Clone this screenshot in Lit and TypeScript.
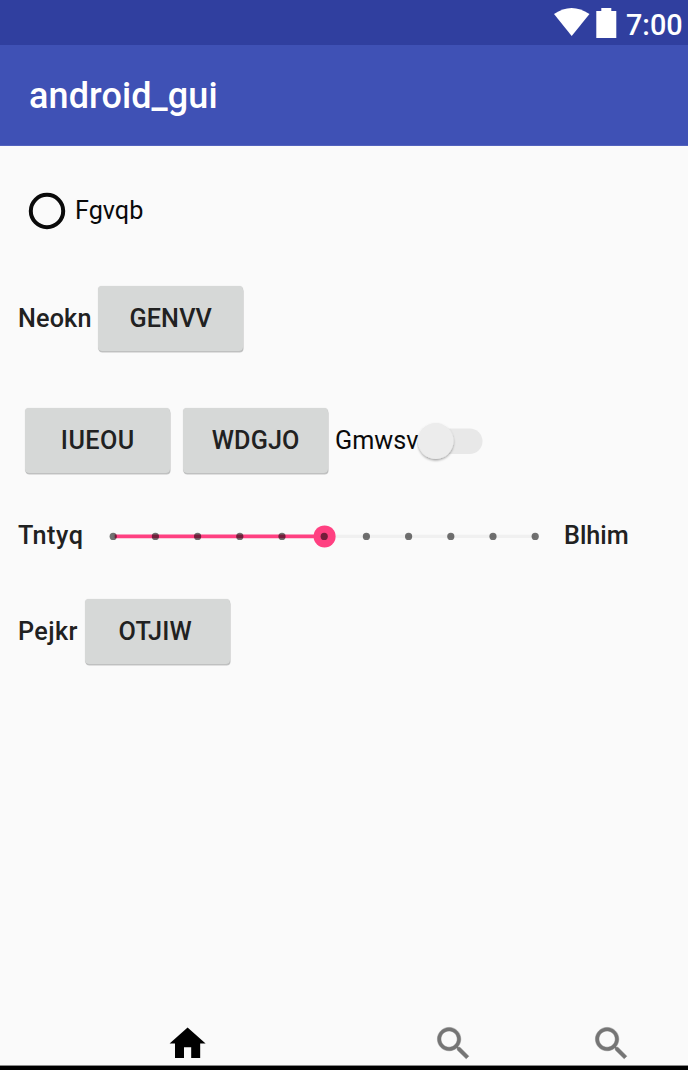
import { LitElement, html, css, svg } from "lit";
import { customElement } from "lit/decorators.js";

const STEPS = 11;
const VALUE = 5;
const STEP_WIDTH = 42.2;
const TRACK_START = 13.2;
const HOME = "M10 20v-6h4v6h5v-8h3L12 3 2 12h3v8z";
const SEARCH =
  "M15.5 14h-.79l-.28-.27C15.41 12.59 16 11.11 16 9.5 16 5.91 13.09 3 9.5 3S3 5.91 3 9.5 5.91 16 9.5 16c1.61 0 3.09-.59 4.23-1.57l.27.28v.79l5 4.99L20.49 19l-4.99-5zm-6 0C7.01 14 5 11.99 5 9.5S7.01 5 9.5 5 14 7.01 14 9.5 11.99 14 9.5 14z";

@customElement("app-root")
export class AppRoot extends LitElement {
  static styles = css`
    :host {
      display: flex;
      flex-direction: column;
      box-sizing: border-box;
      width: 688px;
      height: 1070px;
      overflow: hidden;
      background: #fafafa;
      color: #212121;
      font: 400 25.2px/30px Roboto, sans-serif;
    }
    svg {
      display: block;
      flex: none;
    }
    .status {
      display: flex;
      height: 45px;
      flex: none;
      background: #303f9f;
      color: #fff;
      justify-content: flex-end;
    }
    .clock {
      width: 62px;
      font-size: 28.8px;
      line-height: 51px;
      font-weight: 500;
      white-space: nowrap;
    }
    .bar {
      box-sizing: border-box;
      height: 101px;
      flex: none;
      padding-left: 29px;
      background: #3f51b5;
      border-bottom: 1px solid #5262bd;
      color: #fff;
      font-size: 36px;
      font-weight: 500;
      line-height: 103px;
      letter-spacing: 0.1px;
    }
    .content {
      flex: 1;
      display: flex;
      flex-direction: column;
      padding-left: 18px;
    }
    .row {
      display: flex;
      flex: none;
      align-items: center;
    }
    .radio-row {
      height: 44px;
      margin: 43px 0 53px;
      padding-left: 7px;
      color: #0a0a0a;
    }
    .radio-text {
      margin-left: 6px;
      line-height: 30px;
    }
    .buttons {
      height: 67px;
    }
    .buttons.second {
      margin-top: 55px;
    }
    .buttons.last {
      margin-top: 41px;
    }
    .label {
      font-weight: 500;
      padding-bottom: 2px;
      white-space: nowrap;
    }
    .neokn {
      width: 80px;
      letter-spacing: 0.15px;
    }
    .tntyq {
      width: 82px;
      letter-spacing: 0.5px;
      padding-bottom: 0;
    }
    .pejkr {
      width: 67px;
      letter-spacing: 0.4px;
    }
    .btn {
      box-sizing: border-box;
      width: 145.4px;
      height: 65px;
      margin: 0 0 2px;
      padding: 0;
      border: 0;
      border-radius: 4px;
      background: #d6d8d7;
      box-shadow: 0 0 1px rgba(0, 0, 0, 0.18), 0.5px 1.5px 0.5px #c3c4c4;
      color: #212121;
      font: 500 25.2px/30px Roboto, sans-serif;
      letter-spacing: 0.15px;
    }
    .iueou {
      margin-left: 7px;
      margin-right: 12.6px;
      letter-spacing: 0.4px;
    }
    .otjiw {
      padding-right: 5px;
    }
    .switch-text {
      width: 82px;
      margin-left: 6.6px;
      padding-bottom: 1px;
      color: #0a0a0a;
    }
    .slider-row {
      height: 44px;
      margin-top: 39px;
    }
    .blhim {
      margin-left: 14px;
      padding-bottom: 0;
    }
    .nav {
      box-sizing: border-box;
      display: flex;
      flex: none;
      height: 48px;
      padding: 0.2px 0 0 165.5px;
      border-bottom: 4px solid #000;
      box-shadow: inset 0 -1px #8a8a8a;
    }
    .nav-home {
      margin-right: 223.4px;
    }
    .nav-search {
      margin-right: 115.1px;
    }
  `;

  private slider() {
    const x = (i: number) => TRACK_START + i * STEP_WIDTH;
    return html`<svg width="450" height="44" viewBox="0 0 450 44">
      <path d="M${x(0)} 22.4H${x(10)}" stroke="#f0f0f0" stroke-width="3.4" />
      <path d="M${x(0) + 1.5} 22.4H${x(VALUE)}" stroke="#ff4081" stroke-width="3.6" />
      <circle cx=${x(VALUE) + 0.4} cy="22.4" r="11" fill="#ff4081" />
      ${Array.from(
        { length: STEPS },
        (_, i) => svg`<circle cx=${x(i)} cy="22.4" r="3.6" fill="#000" fill-opacity="0.55" />`
      )}
    </svg>`;
  }

  private icon(path: string, fill: string, cls = "", stroke = 0) {
    return html`<svg class=${cls} width="43.2" height="43.2" viewBox="0 0 24 24">
      <path d=${path} fill=${fill} stroke=${fill} stroke-width=${stroke} />
    </svg>`;
  }

  render() {
    return html`
      <div class="status">
        <svg width="72" height="45" viewBox="0 0 72 45" fill="#fff">
          <path d="M0 14Q17.5 2 35.5 14L17.7 36Z" />
          <path d="M47.3 8h10v3h5v27H42.3V11h5z" />
        </svg>
        <div class="clock">7:00</div>
      </div>
      <div class="bar">android_gui</div>
      <div class="content">
        <div class="row radio-row">
          <svg width="44" height="44" viewBox="0 0 44 44">
            <circle cx="22" cy="22" r="16.2" fill="none" stroke="#0a0a0a" stroke-width="4" />
          </svg>
          <span class="radio-text">Fgvqb</span>
        </div>
        <div class="row buttons">
          <span class="label neokn">Neokn</span>
          <button class="btn">GENVV</button>
        </div>
        <div class="row buttons second">
          <button class="btn iueou">IUEOU</button>
          <button class="btn">WDGJO</button>
          <span class="switch-text">Gmwsv</span>
          <svg width="70" height="50" viewBox="0 0 70 50">
            <defs>
              <filter id="shade" x="-20%" y="-20%" width="140%" height="150%">
                <feDropShadow dx="0" dy="1.5" stdDeviation="1" flood-opacity="0.35" />
              </filter>
            </defs>
            <rect x="7" y="11.5" width="58.5" height="25.5" rx="12.75" fill="#e8e8e8" />
            <circle cx="18.7" cy="24" r="17.9" fill="#ececec" filter="url(#shade)" />
          </svg>
        </div>
        <div class="row slider-row">
          <span class="label tntyq">Tntyq</span>
          ${this.slider()}
          <span class="label blhim">Blhim</span>
        </div>
        <div class="row buttons last">
          <span class="label pejkr">Pejkr</span>
          <button class="btn otjiw">OTJIW</button>
        </div>
      </div>
      <div class="nav">
        ${this.icon(HOME, "#000", "nav-home")}
        ${this.icon(SEARCH, "#757575", "nav-search", 0.25)}
        ${this.icon(SEARCH, "#757575", "", 0.25)}
      </div>
    `;
  }
}
